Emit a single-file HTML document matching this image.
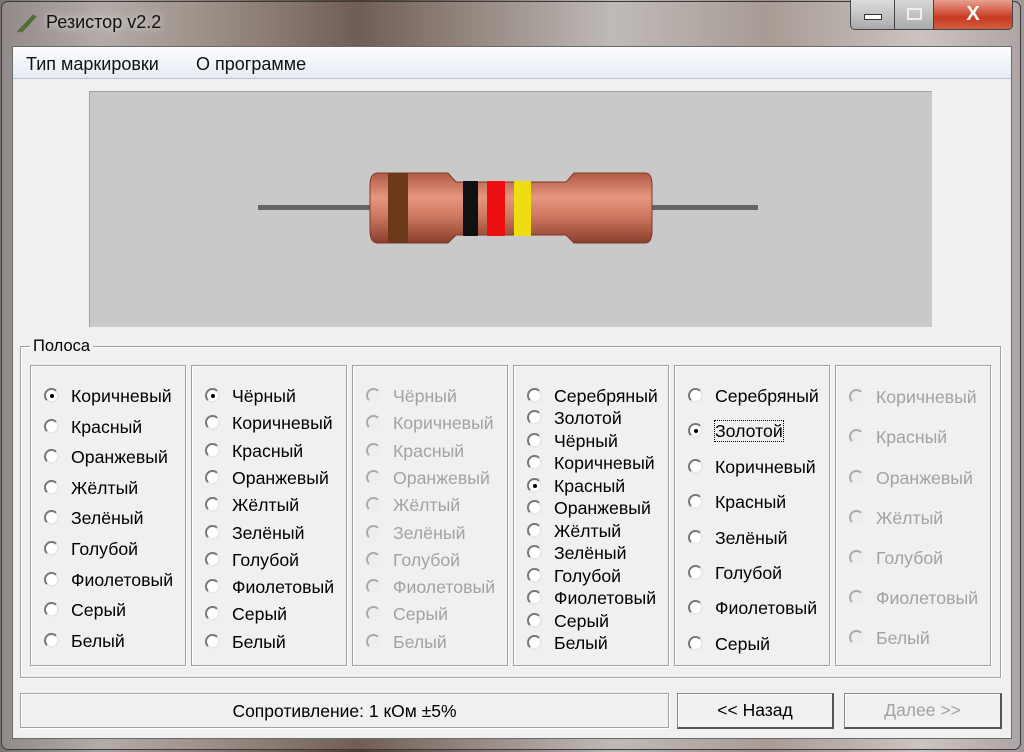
<!DOCTYPE html>
<html><head><meta charset="utf-8">
<style>
*{margin:0;padding:0;box-sizing:border-box}
body{width:1024px;height:752px;overflow:hidden;position:relative;font-family:"Liberation Sans","DejaVu Sans",sans-serif;background:#6b5a52}
.bg{position:absolute;left:0;top:0;width:1024px;height:752px;background:linear-gradient(90deg,#7a7575 0%,#a8a29e 10%,#8c7f76 20%,#4e3b30 35%,#7b6d64 45%,#b9b6b4 60%,#998d85 75%,#c9c3bf 90%,#a0989a 100%)}
.frame{position:absolute;left:1px;top:1px;width:1020px;height:749px;border:1px solid #3a3a3a;border-radius:7px;background:rgba(210,200,195,.25)}
.title{position:absolute;left:46px;top:12px;font-size:18px;color:#111;text-shadow:0 0 8px #eee}
.ctl{position:absolute;top:0;height:30px;border:1px solid #444;border-top:none}
.client{position:absolute;left:12px;top:46px;width:1000px;height:693px;background:#f0f0f0;border:1px solid #6a6a6a}
.menu{position:absolute;left:0;top:0;width:998px;height:32px;background:linear-gradient(#fbfcfe,#e6ebf3);border-bottom:1px solid #b8c4d4;font-size:18px}
.menu span{position:absolute;top:7px;color:#111}
.img{position:absolute;left:76px;top:44px;width:843px;height:236px;background:#c9c9c9;border-left:1px solid #a0a0a0;border-top:1px solid #a0a0a0}
.grp{position:absolute;border:1px solid #a0a0a0;box-shadow:inset 1px 1px 0 #fff,1px 1px 0 #fff}
.col{position:absolute;top:365px;width:156px;height:301px;border:1px solid #a0a0a0;box-shadow:inset 1px 1px 0 #fff,1px 1px 0 #fff}
.r{position:absolute;font-size:17.7px;line-height:22px;white-space:nowrap;color:#000}
.r.d{color:#a2a2a2}
.r i{position:absolute;left:-27px;top:3px;width:15px;height:15px;border-radius:50%;background:#fff;border:2px solid #777;border-right-color:#e8e8e8;border-bottom-color:#e8e8e8}
.r.d i{background:#eee;border-color:#aaa #eee #eee #aaa}
.r i.s::after{content:"";position:absolute;left:3.5px;top:3.5px;width:4px;height:4px;border-radius:50%;background:#000}
.btn{position:absolute;top:693px;height:36px;border:1px solid #888;border-right:2px solid #555;border-bottom:2px solid #555;box-shadow:inset 1px 1px 0 #fff;background:#f0f0f0;font-size:17.5px;text-align:center;line-height:32px}
</style></head><body>
<div class="bg"></div>
<div class="frame"></div>
<svg style="position:absolute;left:14px;top:12px" width="24" height="22"><path d="M4 20 L20 3 M7 20 L22 4" stroke="#4a6a2a" stroke-width="2"/></svg>
<div class="title">Резистор v2.2</div>
<div class="ctl" style="left:850px;width:45px;background:linear-gradient(#ddd,#aaa);border-radius:0 0 0 5px"><div style="position:absolute;left:13px;top:14px;width:18px;height:6px;border:1px solid #333;background:#fff"></div></div>
<div class="ctl" style="left:894px;width:40px;background:linear-gradient(#d8d8d8,#aaa)"><div style="position:absolute;left:12px;top:8px;width:15px;height:12px;border:2px solid #eee"></div></div>
<div class="ctl" style="left:933px;width:80px;background:linear-gradient(#e8a090,#c83a22 60%,#d06040);border-radius:0 0 5px 0;color:#fff;font-weight:bold;font-size:20px;text-align:center;line-height:28px">X</div>

<div class="client">
 <div class="menu"><span style="left:13px">Тип маркировки</span><span style="left:183px">О программе</span></div>
 <div class="img"></div>
</div>
<svg style="position:absolute;left:0;top:0" width="1024" height="330">
 <defs>
  <linearGradient id="b" x1="0" y1="0" x2="0" y2="1"><stop offset="0" stop-color="#b05a44"/><stop offset=".35" stop-color="#e89680"/><stop offset=".6" stop-color="#d07a62"/><stop offset="1" stop-color="#8a3e2c"/></linearGradient>
 </defs>
 <rect x="258" y="205" width="500" height="5" fill="#666"/>
 <path d="M378 173 H448 L456 182 H566 L574 173 H645 Q652 173 652 185 V231 Q652 243 645 243 H574 L566 235 H456 L448 243 H378 Q370 243 370 231 V185 Q370 173 378 173Z" fill="url(#b)" stroke="#7a3a2a" stroke-width="1"/>
 <rect x="388" y="173" width="20" height="70" fill="#6a3a1a"/>
 <rect x="463" y="181" width="15" height="55" fill="#111"/>
 <rect x="487" y="181" width="18" height="55" fill="#ee1010"/>
 <rect x="514" y="181" width="17" height="55" fill="#eedd10"/>
</svg>
<div class="grp" style="left:20px;top:346px;width:981px;height:332px"></div>
<div style="position:absolute;left:30px;top:337px;background:#f0f0f0;font-size:16.5px;padding:0 3px">Полоса</div>
<div class="col" style="left:30px"></div><div class="col" style="left:191px"></div><div class="col" style="left:352px"></div><div class="col" style="left:513px"></div><div class="col" style="left:674px"></div><div class="col" style="left:835px"></div>
<div class="grp" style="left:20px;top:693px;width:649px;height:35px"></div>
<div style="position:absolute;left:20px;top:701px;width:649px;text-align:center;font-size:17.5px">Сопротивление: 1 кОм ±5%</div>
<div class="btn" style="left:677px;width:157px">&lt;&lt; Назад</div>
<div class="btn" style="left:844px;width:158px;color:#a2a2a2">Далее &gt;&gt;</div>

<!-- col1 -->
<div class="r" style="left:71px;top:385px"><i class="s"></i>Коричневый</div>
<div class="r" style="left:71px;top:416px"><i></i>Красный</div>
<div class="r" style="left:71px;top:446px"><i></i>Оранжевый</div>
<div class="r" style="left:71px;top:477px"><i></i>Жёлтый</div>
<div class="r" style="left:71px;top:507px"><i></i>Зелёный</div>
<div class="r" style="left:71px;top:538px"><i></i>Голубой</div>
<div class="r" style="left:71px;top:569px"><i></i>Фиолетовый</div>
<div class="r" style="left:71px;top:599px"><i></i>Серый</div>
<div class="r" style="left:71px;top:630px"><i></i>Белый</div>
<!-- col2 -->
<div class="r" style="left:232px;top:385px"><i class="s"></i>Чёрный</div>
<div class="r" style="left:232px;top:412px"><i></i>Коричневый</div>
<div class="r" style="left:232px;top:440px"><i></i>Красный</div>
<div class="r" style="left:232px;top:467px"><i></i>Оранжевый</div>
<div class="r" style="left:232px;top:494px"><i></i>Жёлтый</div>
<div class="r" style="left:232px;top:522px"><i></i>Зелёный</div>
<div class="r" style="left:232px;top:549px"><i></i>Голубой</div>
<div class="r" style="left:232px;top:576px"><i></i>Фиолетовый</div>
<div class="r" style="left:232px;top:603px"><i></i>Серый</div>
<div class="r" style="left:232px;top:631px"><i></i>Белый</div>
<!-- col3 -->
<div class="r d" style="left:393px;top:385px"><i></i>Чёрный</div>
<div class="r d" style="left:393px;top:412px"><i></i>Коричневый</div>
<div class="r d" style="left:393px;top:440px"><i></i>Красный</div>
<div class="r d" style="left:393px;top:467px"><i></i>Оранжевый</div>
<div class="r d" style="left:393px;top:494px"><i></i>Жёлтый</div>
<div class="r d" style="left:393px;top:522px"><i></i>Зелёный</div>
<div class="r d" style="left:393px;top:549px"><i></i>Голубой</div>
<div class="r d" style="left:393px;top:576px"><i></i>Фиолетовый</div>
<div class="r d" style="left:393px;top:603px"><i></i>Серый</div>
<div class="r d" style="left:393px;top:631px"><i></i>Белый</div>
<!-- col4 -->
<div class="r" style="left:554px;top:385px"><i></i>Серебряный</div>
<div class="r" style="left:554px;top:407px"><i></i>Золотой</div>
<div class="r" style="left:554px;top:430px"><i></i>Чёрный</div>
<div class="r" style="left:554px;top:452px"><i></i>Коричневый</div>
<div class="r" style="left:554px;top:475px"><i class="s"></i>Красный</div>
<div class="r" style="left:554px;top:497px"><i></i>Оранжевый</div>
<div class="r" style="left:554px;top:520px"><i></i>Жёлтый</div>
<div class="r" style="left:554px;top:542px"><i></i>Зелёный</div>
<div class="r" style="left:554px;top:565px"><i></i>Голубой</div>
<div class="r" style="left:554px;top:587px"><i></i>Фиолетовый</div>
<div class="r" style="left:554px;top:610px"><i></i>Серый</div>
<div class="r" style="left:554px;top:632px"><i></i>Белый</div>
<!-- col5 -->
<div class="r" style="left:715px;top:385px"><i></i>Серебряный</div>
<div class="r" style="left:715px;top:420px"><i class="s"></i><span style="outline:1px dotted #000">Золотой</span></div>
<div class="r" style="left:715px;top:456px"><i></i>Коричневый</div>
<div class="r" style="left:715px;top:491px"><i></i>Красный</div>
<div class="r" style="left:715px;top:527px"><i></i>Зелёный</div>
<div class="r" style="left:715px;top:562px"><i></i>Голубой</div>
<div class="r" style="left:715px;top:597px"><i></i>Фиолетовый</div>
<div class="r" style="left:715px;top:633px"><i></i>Серый</div>
<!-- col6 -->
<div class="r d" style="left:876px;top:386px"><i></i>Коричневый</div>
<div class="r d" style="left:876px;top:426px"><i></i>Красный</div>
<div class="r d" style="left:876px;top:467px"><i></i>Оранжевый</div>
<div class="r d" style="left:876px;top:507px"><i></i>Жёлтый</div>
<div class="r d" style="left:876px;top:547px"><i></i>Голубой</div>
<div class="r d" style="left:876px;top:587px"><i></i>Фиолетовый</div>
<div class="r d" style="left:876px;top:627px"><i></i>Белый</div>
</body></html>
